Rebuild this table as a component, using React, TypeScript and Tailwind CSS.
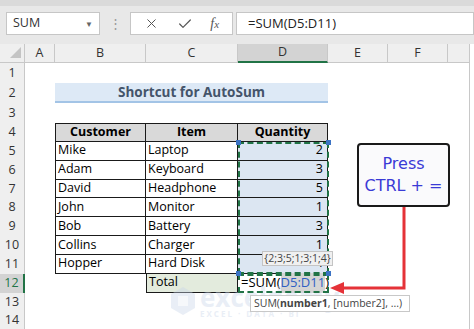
import React from 'react';
import { X, Check } from 'lucide-react';

type RowDef = { n: number; h: string };

const rows: RowDef[] = [
  { n: 1, h: 'h-[20px]' },
  { n: 2, h: 'h-[20px]' },
  { n: 3, h: 'h-[20px]' },
  { n: 4, h: 'h-[18.85px]' },
  { n: 5, h: 'h-[18.85px]' },
  { n: 6, h: 'h-[18.85px]' },
  { n: 7, h: 'h-[18.85px]' },
  { n: 8, h: 'h-[18.85px]' },
  { n: 9, h: 'h-[18.85px]' },
  { n: 10, h: 'h-[18.85px]' },
  { n: 11, h: 'h-[18.85px]' },
  { n: 12, h: 'h-[18.85px]' },
  { n: 13, h: 'h-[18.85px]' },
  { n: 14, h: 'h-[18.85px]' },
];

const data: [string, string, number][] = [
  ['Mike', 'Laptop', 2],
  ['Adam', 'Keyboard', 3],
  ['David', 'Headphone', 5],
  ['John', 'Monitor', 1],
  ['Bob', 'Battery', 3],
  ['Collins', 'Charger', 1],
  ['Hopper', 'Hard Disk', 4],
];

function RowHeader({ n }: { n: number }) {
  const active = n === 12;
  return (
    <div
      className={
        active
          ? 'w-[25px] shrink-0 flex items-center justify-center bg-[#d3d3d3] border-r-2 border-[#217346] text-[#217346] text-[12.5px]'
          : 'w-[25px] shrink-0 flex items-center justify-center bg-[#efefef] border-r border-[#c8c8c8] text-[#333] text-[12.5px]'
      }
    >
      {n}
    </div>
  );
}

function Empty({ w }: { w: string }) {
  return <div className={`${w} shrink-0`} />;
}

function Tail() {
  return (
    <>
      <div className="w-[60px] shrink-0" />
      <div className="w-[60px] shrink-0" />
      <div className="w-[22px] shrink-0 border-r border-[#c8c8c8]" />
      <div className="flex-1" />
    </>
  );
}

function SheetRow({ r }: { r: RowDef }) {
  const n = r.n;
  let cells: React.ReactNode = (
    <>
      <Empty w="w-[30px]" />
      <Empty w="w-[91px]" />
      <Empty w="w-[92px]" />
      <Empty w="w-[90px]" />
    </>
  );
  if (n === 2) {
    cells = (
      <>
        <Empty w="w-[30px]" />
        <div className="w-[273px] shrink-0 bg-[#dde9f6] border-b-2 border-[#a3c4e6] flex items-center justify-center font-bold text-[#44546a] text-[13.5px]">
          Shortcut for AutoSum
        </div>
      </>
    );
  } else if (n === 4) {
    cells = (
      <>
        <Empty w="w-[30px]" />
        <div className="w-[91px] shrink-0 border border-[#1a1a1a] bg-[#d9d9d9] flex items-center justify-center font-bold text-black">
          Customer
        </div>
        <div className="w-[92px] shrink-0 border-t border-r border-b border-[#1a1a1a] bg-[#d9d9d9] flex items-center justify-center font-bold text-black">
          Item
        </div>
        <div className="w-[90px] shrink-0 border-t border-r border-b border-[#1a1a1a] bg-[#d9d9d9] flex items-center justify-center font-bold text-black">
          Quantity
        </div>
      </>
    );
  } else if (n >= 5 && n <= 11) {
    const d = data[n - 5];
    cells = (
      <>
        <Empty w="w-[30px]" />
        <div className="w-[91px] shrink-0 border-l border-r border-b border-[#1a1a1a] flex items-center pl-[2px] text-black">
          {d[0]}
        </div>
        <div className="w-[92px] shrink-0 border-r border-b border-[#1a1a1a] flex items-center pl-[2px] text-black">
          {d[1]}
        </div>
        <div className="w-[90px] shrink-0 border-r border-b border-[#1a1a1a] bg-[#dce6f2] flex items-center justify-end pr-[4px] text-black">
          {d[2]}
        </div>
      </>
    );
  } else if (n === 12) {
    cells = (
      <>
        <Empty w="w-[30px]" />
        <Empty w="w-[91px]" />
        <div className="w-[92px] shrink-0 border-l border-r border-b border-[#1a1a1a] bg-[#e3ebdd] flex items-center pl-[2px] text-black">
          Total
        </div>
        <div className="w-[90px] shrink-0 flex items-center pl-[3px] text-black text-[13px]">
          <span>=SUM(</span>
          <span className="bg-[#d4d4d4] text-[#2f5fc4]">D5:D11</span>
          <span>)</span>
        </div>
      </>
    );
  }
  return (
    <div className={`flex ${r.h} text-[12.5px]`}>
      <RowHeader n={n} />
      {cells}
      <Tail />
    </div>
  );
}

function ColHeader({ label, w, active }: { label: string; w: string; active?: boolean }) {
  return (
    <div
      className={
        active
          ? `${w} shrink-0 flex items-center justify-center bg-[#d3d3d3] border-b-2 border-[#217346] border-r border-r-[#c8c8c8] text-[#333] text-[12.5px]`
          : `${w} shrink-0 flex items-center justify-center bg-[#efefef] border-b border-[#c8c8c8] border-r text-[#333] text-[12.5px]`
      }
    >
      {label}
    </div>
  );
}

export default function App() {
  return (
    <div className="relative w-[474px] h-[329px] overflow-hidden bg-white" style={{ fontFamily: '"Open Sans", "Noto Sans", sans-serif' }}>
      {/* Toolbar */}
      <div className="h-[44px] bg-[#e8e8e8] flex flex-col">
        <div className="h-[6px] bg-[#dadada]" />
        <div className="flex items-start pt-[6px]">
          <div className="ml-[6px] w-[94px] h-[23px] bg-white border border-[#c6c6c6] flex items-center justify-between pl-[6px] pr-[6px] text-[12.5px] text-[#333]">
            <span>SUM</span>
            <span className="text-[8px] text-[#666]">▼</span>
          </div>
          <div className="w-[30px] h-[23px] flex items-center justify-center text-[#999] text-[13px]">⋮</div>
          <div className="w-[103px] h-[23px] bg-white border border-[#c6c6c6] flex items-center justify-around px-[4px] text-[#555]">
            <X size={15} strokeWidth={1.6} />
            <Check size={16} strokeWidth={1.8} />
            <span className="italic text-[14px] text-[#555]" style={{ fontFamily: '"Liberation Serif", serif' }}>
              f<span className="text-[11px]">x</span>
            </span>
          </div>
          <div className="ml-[3px] flex-1 h-[23px] bg-white border border-[#c6c6c6] flex items-center pl-[11px] text-[13px] text-[#222]">
            =SUM(D5:D11)
          </div>
        </div>
      </div>
      {/* Column headers */}
      <div className="flex h-[19px]">
        <div className="w-[25px] shrink-0 bg-[#efefef] border-b border-r border-[#c8c8c8] relative">
          <div
            className="absolute right-[3px] bottom-[4px] w-[11px] h-[11px] bg-[#c4c4c4]"
            style={{ clipPath: 'polygon(100% 0, 100% 100%, 0 100%)' }}
          />
        </div>
        <ColHeader label="A" w="w-[30px]" />
        <ColHeader label="B" w="w-[91px]" />
        <ColHeader label="C" w="w-[92px]" />
        <ColHeader label="D" w="w-[90px]" active />
        <ColHeader label="E" w="w-[60px]" />
        <ColHeader label="F" w="w-[60px]" />
        <div className="w-[22px] shrink-0 bg-[#efefef] border-b border-r border-[#c8c8c8]" />
        <div className="flex-1 bg-white" />
      </div>
      {/* Rows */}
      <div className="flex flex-col">
        {rows.map((r) => (
          <SheetRow key={r.n} r={r} />
        ))}
      </div>

      {/* Watermark */}
      <div className="absolute left-[170px] top-[284px] flex items-center gap-[4px] opacity-40 pointer-events-none">
        <svg width="26" height="30" viewBox="0 0 26 30">
          <path d="M13 1 L25 8 L25 22 L13 29 L1 22 L1 8 Z" fill="#c9d6ea" />
          <path d="M8 10 L18 10 L18 20 L8 20 Z" fill="#ffffff" opacity="0.6" />
        </svg>
        <div className="flex flex-col leading-none">
          <span className="text-[26px] font-bold text-[#c9d6ea]">exceldemy</span>
          <span className="text-[8px] tracking-[2px] text-[#c9d6ea] font-bold">EXCEL · DATA · BI</span>
        </div>
      </div>

      {/* Marching ants around D5:D11 */}
      <div className="absolute left-[238px] top-[142px] w-[91px] h-[132px] border-2 border-dashed border-[#217346] pointer-events-none" />
      {/* D12 active */}
      <div className="absolute left-[238px] top-[274px] w-[91px] h-[19px] border-2 border-dashed border-[#217346] pointer-events-none" />
      {/* handles */}
      <div className="absolute left-[236px] top-[140px] w-[5px] h-[5px] bg-[#3b73c4]" />
      <div className="absolute left-[326px] top-[140px] w-[5px] h-[5px] bg-[#3b73c4]" />
      <div className="absolute left-[236px] top-[271px] w-[5px] h-[5px] bg-[#3b73c4]" />
      <div className="absolute left-[326px] top-[271px] w-[5px] h-[5px] bg-[#3b73c4]" />

      {/* Tooltip array */}
      <div className="absolute left-[262px] top-[251px] w-[71px] h-[15px] bg-[#f0f0f0] border border-[#c4c4c4] flex items-center justify-center text-[10.5px] text-[#444]">
        {'{2;3;5;1;3;1;4}'}
      </div>

      {/* Function tooltip */}
      <div className="absolute left-[250px] top-[295px] w-[160px] h-[17px] bg-white border border-[#c8c8c8] flex items-center pl-[3px] text-[10.5px] text-[#444] whitespace-nowrap">
        SUM(<span className="font-bold">number1</span>, [number2], ...)
      </div>

      {/* Callout */}
      <div
        className="absolute left-[357px] top-[143px] w-[93px] h-[64px] bg-[#fafafc] border-2 border-[#1a1a1a] rounded-[4px] flex flex-col items-center justify-center text-[#3a3ad6] text-[16px] leading-[22px]"
        style={{ fontFamily: '"Comic Sans MS", "DejaVu Sans", sans-serif' }}
      >
        <span>Press</span>
        <span>CTRL + =</span>
      </div>

      {/* Arrow */}
      <svg className="absolute left-0 top-0 pointer-events-none" width="474" height="329" viewBox="0 0 474 329">
        <path d="M404 207 V288 H340" fill="none" stroke="#e53238" strokeWidth="3" />
        <polygon points="330,288 344,282 344,294" fill="#e53238" />
      </svg>
    </div>
  );
}
